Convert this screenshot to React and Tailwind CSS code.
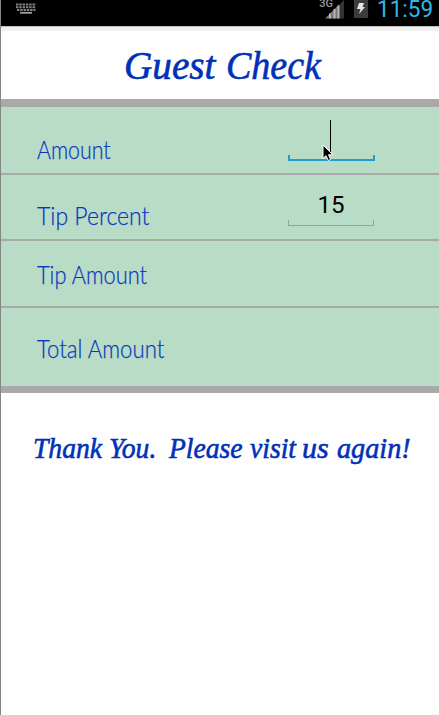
import React from "react";

const script =
  "font-['Liberation_Serif',serif] font-normal italic text-[#0030b8] whitespace-nowrap [-webkit-text-stroke:0.6px_#0030b8]";
const label =
  "font-[Lato,sans-serif] font-light text-[26px] leading-[30px] text-[#0a38bd] whitespace-nowrap origin-left [-webkit-text-stroke:0.25px_#0a38bd]";

function KeyboardIcon() {
  return (
    <svg className="mt-[3px] ml-[15px] h-[11px] w-[21px]" viewBox="0 0 21 11">
      <path d="M0 1.500h20M0 4.300h20M1 7h18.500" stroke="#858585" strokeWidth="2" strokeDasharray="2.4 0.9" />
      <path d="M4 9.800h12" stroke="#a0a0a0" strokeWidth="1.800" />
    </svg>
  );
}

function StatusBar() {
  return (
    <div className="flex h-[26px] items-start bg-black">
      <KeyboardIcon />
      <div className="ml-auto flex h-[26px] items-start">
        <span className="-mr-[8px] font-[Roboto,sans-serif] text-[11px] leading-[7px] font-medium text-[#999999]">3G</span>
        <svg className="mr-[9px] h-[20px] w-[20px]" viewBox="0 0 20 20">
          <path d="M14 5l5-5v18.500h-5z" fill="#333" />
          <path d="M0 18.500L14 4.500v14z" fill="#777" />
          <path d="M5 18.500v-5M9.500 18.500v-9.500M13.500 18.500v-13" stroke="#b5b5b5" strokeWidth="2" />
        </svg>
        <svg className="mr-[9px] h-[19px] w-[14px]" viewBox="0 0 14 19">
          <path d="M0 0h14v18H0z" fill="#3c3c3c" />
          <path d="M5 3h5L8.500 7H11L5 14l1.500-5H3z" fill="#e5e5e5" />
        </svg>
        <span className="mr-[6px] w-[56px] origin-left scale-x-[0.98] font-[Roboto,sans-serif] text-[23px] leading-[19px] text-[#33b5e5]">11:59</span>
      </div>
    </div>
  );
}

function Cursor() {
  return (
    <svg className="absolute top-[37px] left-[35px] h-[19px] w-[12px]" viewBox="0 0 12 19">
      <path d="M1 1v13.500l3-2.800 2.200 4.800 2.400-1-2.100-4.700h4.300z" fill="#000" stroke="#fff" strokeWidth="1" />
    </svg>
  );
}

export default function App() {
  return (
    <div className="h-[715px] w-[439px] overflow-hidden border-l border-[#858585] bg-[#fefefe]">
      <StatusBar />
      <header className="h-[73px] border-t border-[#c4c4c4]">
        <div className="h-[4px] bg-[#f0f0f0]" />
        <h1 className={`${script} ml-[123px] flex pt-[12px] text-[40px] leading-[46px]`}>
          <span className="w-[102px] origin-left scale-x-[0.98]">Guest</span>
          <span className="origin-left scale-x-[0.95]">Check</span>
        </h1>
      </header>
      <main className="border-t-8 border-b-[7px] border-[#a9a9a9] bg-[#b9dcc7]">
        <div className="flex h-[68px] border-b-2 border-[#a9a9a9] pl-[36px]">
          <div className="w-[250px] pt-[27px]">
            <div className={`${label} scale-x-[0.82]`}>Amount</div>
          </div>
          <div className="relative h-[55px] w-[88px]">
            <div className="ml-[43px] h-[33px] w-px translate-y-[13px] bg-black" />
            <div className="mt-[15px] ml-[1px] h-[6px] w-[87px] border-x-2 border-b-2 border-[#209ed4]" />
            <Cursor />
          </div>
        </div>
        <div className="flex h-[66px] border-b-2 border-[#a9a9a9] pl-[36px]">
          <div className="w-[251px] pt-[25px]">
            <div className={`${label} scale-x-[0.885]`}>Tip Percent</div>
          </div>
          <div className="w-[86px]">
            <div className="pt-[15px] text-center font-[Roboto,sans-serif] text-[24px] leading-[30px] text-black">15</div>
            <div className="h-[6px] border-x border-b border-[#8aaa98]" />
          </div>
        </div>
        <div className="h-[67px] border-b-2 border-[#a9a9a9] pt-[18px] pl-[36px]">
          <div className={`${label} scale-x-[0.84]`}>Tip Amount</div>
        </div>
        <div className="h-[78px] pt-[25px] pl-[36px]">
          <div className={`${label} scale-x-[0.853]`}>Total Amount</div>
        </div>
      </main>
      <footer className={`${script} flex pt-[37px] pl-[32px] text-[30px] leading-[36px]`}>
        <span className="w-[76px] origin-left scale-x-[0.92]">Thank</span>
        <span className="w-[60px] origin-left scale-x-[0.92]">You.</span>
        <span className="w-[81px] origin-left scale-x-[0.92]">Please</span>
        <span className="w-[52px] origin-left scale-x-[0.92]">visit</span>
        <span className="w-[35px]">us</span>
        <span className="origin-left scale-x-[0.94]">again!</span>
      </footer>
    </div>
  );
}
